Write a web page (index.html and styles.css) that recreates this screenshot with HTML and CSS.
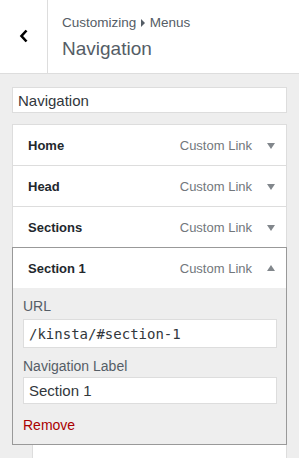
FILE: index.html
```html
<!DOCTYPE html>
<html lang="en">
<head>
    <meta charset="UTF-8">
    <meta name="viewport" content="width=device-width, initial-scale=1.0">
    <title>Customizing Menus</title>
    <link rel="stylesheet" href="styles.css">
</head>
<body>
    <div class="header">
        <button class="back" type="button">
            <svg width="10" height="14" viewBox="0 0 10 14"><path d="M7.5 1.5 L2.5 7 L7.5 12.5" fill="none" stroke="#000" stroke-width="2.6"/></svg>
        </button>
        <div class="title">
            <div class="crumb">Customizing <span class="caret"></span> Menus</div>
            <div class="heading">Navigation</div>
        </div>
    </div>

    <div class="content">
        <input class="name-input" type="text" value="Navigation">

        <ul class="menu">
            <li class="item">
                <div class="item-bar"><span class="item-title">Home</span><span class="item-type">Custom Link</span><span class="toggle down"></span></div>
            </li>
            <li class="item">
                <div class="item-bar"><span class="item-title">Head</span><span class="item-type">Custom Link</span><span class="toggle down"></span></div>
            </li>
            <li class="item">
                <div class="item-bar"><span class="item-title">Sections</span><span class="item-type">Custom Link</span><span class="toggle down"></span></div>
            </li>
            <li class="item open">
                <div class="item-bar"><span class="item-title">Section 1</span><span class="item-type">Custom Link</span><span class="toggle up"></span></div>
                <div class="settings">
                    <label class="field-label">URL</label>
                    <input class="field url" type="text" value="/kinsta/#section-1">
                    <label class="field-label second">Navigation Label</label>
                    <input class="field" type="text" value="Section 1">
                    <a class="remove" href="#">Remove</a>
                </div>
            </li>
            <li class="item sub">
                <div class="item-bar"></div>
            </li>
        </ul>
    </div>
</body>
</html>
```

FILE: styles.css
```css
body { margin: 0; background: #eee; font-family: "Liberation Sans", Arial, sans-serif; color: #555d66; overflow: hidden; }
.header { display: flex; height: 73px; background: #fff; border-bottom: 1px solid #ddd; }
.back { width: 48px; border: none; border-right: 1px solid #ddd; background: #fff; padding: 0; display: flex; align-items: center; justify-content: center; cursor: pointer; }
.back svg { margin-left: 1px; margin-top: -1px; }
.title { padding: 14px 0 0 14px; }
.crumb { font-size: 13.5px; line-height: 18px; color: #555d66; }
.caret { display: inline-block; width: 0; height: 0; border-top: 4px solid transparent; border-bottom: 4px solid transparent; border-left: 4px solid #555d66; margin: 0 1px; }
.heading { font-size: 19px; line-height: 26px; margin-top: 4px; color: #555d66; }
.content { padding: 13px 12px 0 12px; }
.name-input { display: block; box-sizing: border-box; width: 100%; height: 26px; border: 1px solid #ddd; background: #fff; font-family: inherit; font-size: 15px; color: #32373c; padding: 0 5px; margin: 0; outline: none; }
.menu { list-style: none; margin: 11px 0 0 0; padding: 0; }
.item { background: #fff; border: 1px solid #ddd; margin-top: -1px; position: relative; }
.item:first-child { margin-top: 0; }
.item.open { border-color: #999; z-index: 1; }
.item-bar { display: flex; align-items: center; height: 40px; padding-left: 15px; }
.item-title { flex: 1; font-size: 13px; font-weight: bold; color: #23282d; }
.item-type { font-size: 13px; color: #72777c; }
.toggle { width: 30px; display: flex; justify-content: center; margin-left: 4px; }
.toggle::after { content: ""; width: 0; height: 0; border-left: 4px solid transparent; border-right: 4px solid transparent; }
.toggle.down::after { border-top: 6px solid #82878c; margin-top: 1px; }
.toggle.up::after { border-bottom: 6px solid #82878c; margin-top: -1px; }
.settings { background: #eee; padding: 9px 9px 10px 10px; }
.field-label { display: block; font-size: 14px; line-height: 18px; color: #555d66; margin-bottom: 4px; }
.field-label.second { margin-top: 9px; margin-bottom: 2px; }
.field { display: block; box-sizing: border-box; width: 100%; height: 27px; margin: 0; border: 1px solid #ddd; background: #fff; padding: 0 5px; font-family: "Liberation Sans", Arial, sans-serif; font-size: 15px; color: #32373c; outline: none; }
.field.url { font-family: "DejaVu Sans Mono", "Liberation Mono", monospace; font-size: 14px; height: 29px; }
.remove { display: inline-block; margin-top: 13px; font-size: 14px; color: #a00; text-decoration: none; }
.item.sub { margin-left: 20px; height: 40px; }
```
